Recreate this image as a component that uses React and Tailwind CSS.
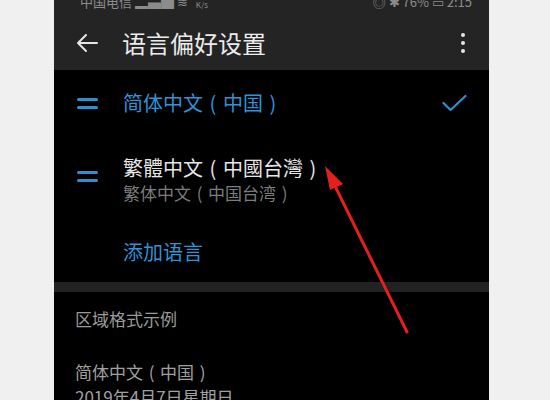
const font = { fontFamily: '"Noto Sans CJK SC", "Noto Sans CJK TC", "Noto Sans", sans-serif' };

// brackets drawn centred in a full em box, as the phone's font does
function Cjk({ text }) {
  return text.split(/([（）])/).map((part, i) =>
    part === '（' ? (
      <span key={i} className="inline-block w-[1em] text-center">(</span>
    ) : part === '）' ? (
      <span key={i} className="inline-block w-[1em] text-center">)</span>
    ) : (
      part
    )
  );
}

function Equals() {
  return (
    <div className="w-[21px] flex flex-col gap-[5px]">
      <div className="h-[3px] bg-[#2f8fd0] rounded-sm" />
      <div className="h-[3px] bg-[#2f8fd0] rounded-sm" />
    </div>
  );
}

export default function App() {
  return (
    <div className="w-[550px] h-[400px] bg-[#f0f0f0] overflow-hidden relative" style={font}>
      <div className="ml-[54px] w-[435px] h-full bg-black flex flex-col overflow-hidden">
        {/* header */}
        <div className="h-[70px] bg-[#242424] flex flex-col shrink-0">
          <div className="h-[9px] overflow-hidden flex items-end justify-between pl-[26px] pr-[17px] text-[#8c8c8c]">
            <div className="flex items-end gap-[8px]">
              <span className="text-[13px] leading-[14px]">中国电信 ▂▄▆ ≋</span>
              <span className="text-[8px] leading-[9px]">K/s</span>
            </div>
            <span className="text-[13px] leading-[14px]">◎ ✱ 76% ▭ 2:15</span>
          </div>
          <div className="h-[61px] pt-[7px] flex items-center pl-[22px] pr-[24px]">
            <svg width="22" height="20" viewBox="0 0 22 20" fill="none" stroke="#e6e6e6" strokeWidth="2" strokeLinecap="round" strokeLinejoin="round">
              <path d="M21 10H2M10 2L2 10l8 8" />
            </svg>
            <span className="ml-[24px] text-[24px] leading-[30px] text-[#ececec]">语言偏好设置</span>
            <div className="ml-auto flex flex-col gap-[4px] items-center">
              <div className="w-[4px] h-[4px] rounded-full bg-[#e6e6e6]" />
              <div className="w-[4px] h-[4px] rounded-full bg-[#e6e6e6]" />
              <div className="w-[4px] h-[4px] rounded-full bg-[#e6e6e6]" />
            </div>
          </div>
        </div>

        {/* row 1 */}
        <div className="h-[66px] flex items-center pl-[23px] pr-[22px] shrink-0">
          <Equals />
          <span className="ml-[25px] text-[20px] leading-[26px] text-[#2f93d6]"><Cjk text="简体中文（中国）" /></span>
          <svg className="ml-auto" width="25" height="18" viewBox="0 0 25 18" fill="none" stroke="#2f8fd0" strokeWidth="2.2" strokeLinecap="round" strokeLinejoin="round">
            <path d="M1.5 9l7 7L23.5 2" />
          </svg>
        </div>

        {/* row 2 */}
        <div className="h-[86px] flex items-center pl-[23px] shrink-0">
          <div className="mt-[-6px]"><Equals /></div>
          <div className="ml-[25px] flex flex-col">
            <span className="text-[20px] leading-[25px] text-[#e6e6e6]"><Cjk text="繁體中文（中國台灣）" /></span>
            <span className="text-[17px] leading-[21px] mt-[2px] text-[#7c7c7c]"><Cjk text="繁体中文（中国台湾）" /></span>
          </div>
        </div>

        {/* add language */}
        <div className="h-[60px] flex items-center pl-[69px] shrink-0">
          <span className="text-[20px] leading-[26px] text-[#2f93d6]">添加语言</span>
        </div>

        <div className="h-[10px] bg-[#222222] shrink-0" />

        <div className="pl-[21px] pt-[15px] flex flex-col text-[17px] leading-[24px] text-[#9a9a9a]">
          <span>区域格式示例</span>
          <span className="mt-[29px] text-[#a0a0a0]"><Cjk text="简体中文（中国）" /></span>
          <span className="leading-[26px] text-[#a0a0a0]">2019年4月7日星期日</span>
        </div>
      </div>

      {/* red annotation arrow */}
      <svg className="absolute left-0 top-0 pointer-events-none" width="550" height="400" viewBox="0 0 550 400">
        <line x1="407" y1="332" x2="331" y2="178" stroke="#e3201b" strokeWidth="3" strokeLinecap="round" />
        <path d="M325 166L343 184L330 190Z" fill="#e3201b" />
      </svg>
    </div>
  );
}
